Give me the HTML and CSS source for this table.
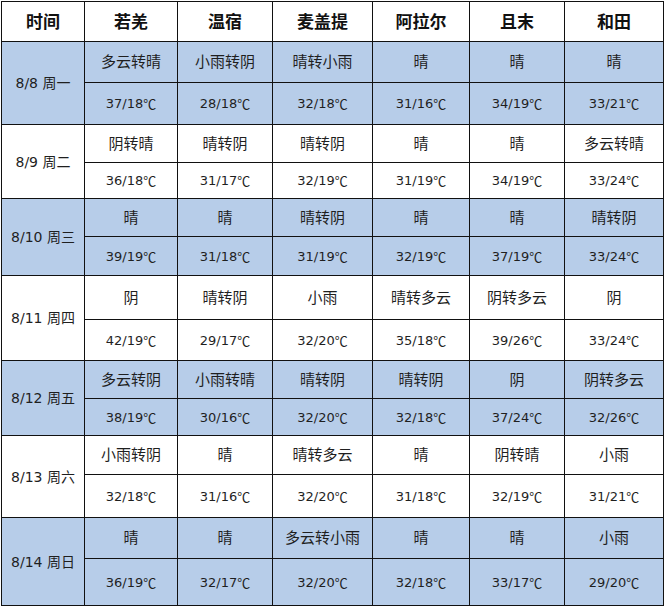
FILE: index.html
```html
<!DOCTYPE html>
<html lang="zh">
<head>
<meta charset="utf-8">
<title>天气预报</title>
<link rel="stylesheet" href="styles.css">
</head>
<body>
<div class="sheet">
  <div class="cell head">时间</div>
  <div class="cell head">若羌</div>
  <div class="cell head">温宿</div>
  <div class="cell head">麦盖提</div>
  <div class="cell head">阿拉尔</div>
  <div class="cell head">且末</div>
  <div class="cell head">和田</div>

  <div class="cell date blue">8/8 周一</div>
  <div class="cell wx blue">多云转晴</div><div class="cell wx blue">小雨转阴</div><div class="cell wx blue">晴转小雨</div><div class="cell wx blue">晴</div><div class="cell wx blue">晴</div><div class="cell wx blue">晴</div>
  <div class="cell tp blue">37/18<span class="u">℃</span></div><div class="cell tp blue">28/18<span class="u">℃</span></div><div class="cell tp blue">32/18<span class="u">℃</span></div><div class="cell tp blue">31/16<span class="u">℃</span></div><div class="cell tp blue">34/19<span class="u">℃</span></div><div class="cell tp blue">33/21<span class="u">℃</span></div>

  <div class="cell date">8/9 周二</div>
  <div class="cell wx">阴转晴</div><div class="cell wx">晴转阴</div><div class="cell wx">晴转阴</div><div class="cell wx">晴</div><div class="cell wx">晴</div><div class="cell wx">多云转晴</div>
  <div class="cell tp">36/18<span class="u">℃</span></div><div class="cell tp">31/17<span class="u">℃</span></div><div class="cell tp">32/19<span class="u">℃</span></div><div class="cell tp">31/19<span class="u">℃</span></div><div class="cell tp">34/19<span class="u">℃</span></div><div class="cell tp">33/24<span class="u">℃</span></div>

  <div class="cell date blue">8/10 周三</div>
  <div class="cell wx blue">晴</div><div class="cell wx blue">晴</div><div class="cell wx blue">晴转阴</div><div class="cell wx blue">晴</div><div class="cell wx blue">晴</div><div class="cell wx blue">晴转阴</div>
  <div class="cell tp blue">39/19<span class="u">℃</span></div><div class="cell tp blue">31/18<span class="u">℃</span></div><div class="cell tp blue">31/19<span class="u">℃</span></div><div class="cell tp blue">32/19<span class="u">℃</span></div><div class="cell tp blue">37/19<span class="u">℃</span></div><div class="cell tp blue">33/24<span class="u">℃</span></div>

  <div class="cell date">8/11 周四</div>
  <div class="cell wx">阴</div><div class="cell wx">晴转阴</div><div class="cell wx">小雨</div><div class="cell wx">晴转多云</div><div class="cell wx">阴转多云</div><div class="cell wx">阴</div>
  <div class="cell tp">42/19<span class="u">℃</span></div><div class="cell tp">29/17<span class="u">℃</span></div><div class="cell tp">32/20<span class="u">℃</span></div><div class="cell tp">35/18<span class="u">℃</span></div><div class="cell tp">39/26<span class="u">℃</span></div><div class="cell tp">33/24<span class="u">℃</span></div>

  <div class="cell date blue">8/12 周五</div>
  <div class="cell wx blue">多云转阴</div><div class="cell wx blue">小雨转晴</div><div class="cell wx blue">晴转阴</div><div class="cell wx blue">晴转阴</div><div class="cell wx blue">阴</div><div class="cell wx blue">阴转多云</div>
  <div class="cell tp blue">38/19<span class="u">℃</span></div><div class="cell tp blue">30/16<span class="u">℃</span></div><div class="cell tp blue">32/20<span class="u">℃</span></div><div class="cell tp blue">32/18<span class="u">℃</span></div><div class="cell tp blue">37/24<span class="u">℃</span></div><div class="cell tp blue">32/26<span class="u">℃</span></div>

  <div class="cell date">8/13 周六</div>
  <div class="cell wx">小雨转阴</div><div class="cell wx">晴</div><div class="cell wx">晴转多云</div><div class="cell wx">晴</div><div class="cell wx">阴转晴</div><div class="cell wx">小雨</div>
  <div class="cell tp">32/18<span class="u">℃</span></div><div class="cell tp">31/16<span class="u">℃</span></div><div class="cell tp">32/20<span class="u">℃</span></div><div class="cell tp">31/18<span class="u">℃</span></div><div class="cell tp">32/19<span class="u">℃</span></div><div class="cell tp">31/21<span class="u">℃</span></div>

  <div class="cell date blue">8/14 周日</div>
  <div class="cell wx blue">晴</div><div class="cell wx blue">晴</div><div class="cell wx blue">多云转小雨</div><div class="cell wx blue">晴</div><div class="cell wx blue">晴</div><div class="cell wx blue">小雨</div>
  <div class="cell tp blue">36/19<span class="u">℃</span></div><div class="cell tp blue">32/17<span class="u">℃</span></div><div class="cell tp blue">32/20<span class="u">℃</span></div><div class="cell tp blue">32/18<span class="u">℃</span></div><div class="cell tp blue">33/17<span class="u">℃</span></div><div class="cell tp blue">29/20<span class="u">℃</span></div>
</div>
</body>
</html>
```

FILE: styles.css
```css
html, body {
  margin: 0;
  padding: 0;
  background: #ffffff;
}

body {
  padding: 1px 0 0 1px;
  font-family: "Noto Sans CJK SC", sans-serif;
  color: #1f1f1f;
}

.sheet {
  display: grid;
  width: max-content;
  grid-template-columns: 82px 92px 94px 99px 96px 94px 98px;
  grid-template-rows: 39px 40px 41px 37px 35px 37px 38px 43px 40px 37px 36px 38px 42px 40px 46px;
  gap: 1px;
  padding: 1px;
  background: #111111;
}

.cell {
  display: flex;
  align-items: center;
  justify-content: center;
  background: #ffffff;
  white-space: nowrap;
  line-height: 1;
}

.cell.blue {
  background: #b7cde9;
}

.head {
  font-size: 17px;
  font-weight: 700;
  color: #111111;
  padding-bottom: 3px;
}

.date {
  grid-row: span 2;
  font-family: "DejaVu Sans", "Noto Sans CJK SC", sans-serif;
  font-size: 14px;
}

.wx {
  font-size: 15px;
  padding-bottom: 3px;
}

.tp {
  font-family: "DejaVu Sans", "Noto Sans CJK SC", sans-serif;
  font-size: 13px;
}

.u {
  font-family: "Noto Sans CJK SC", sans-serif;
  font-size: 13px;
}
```
